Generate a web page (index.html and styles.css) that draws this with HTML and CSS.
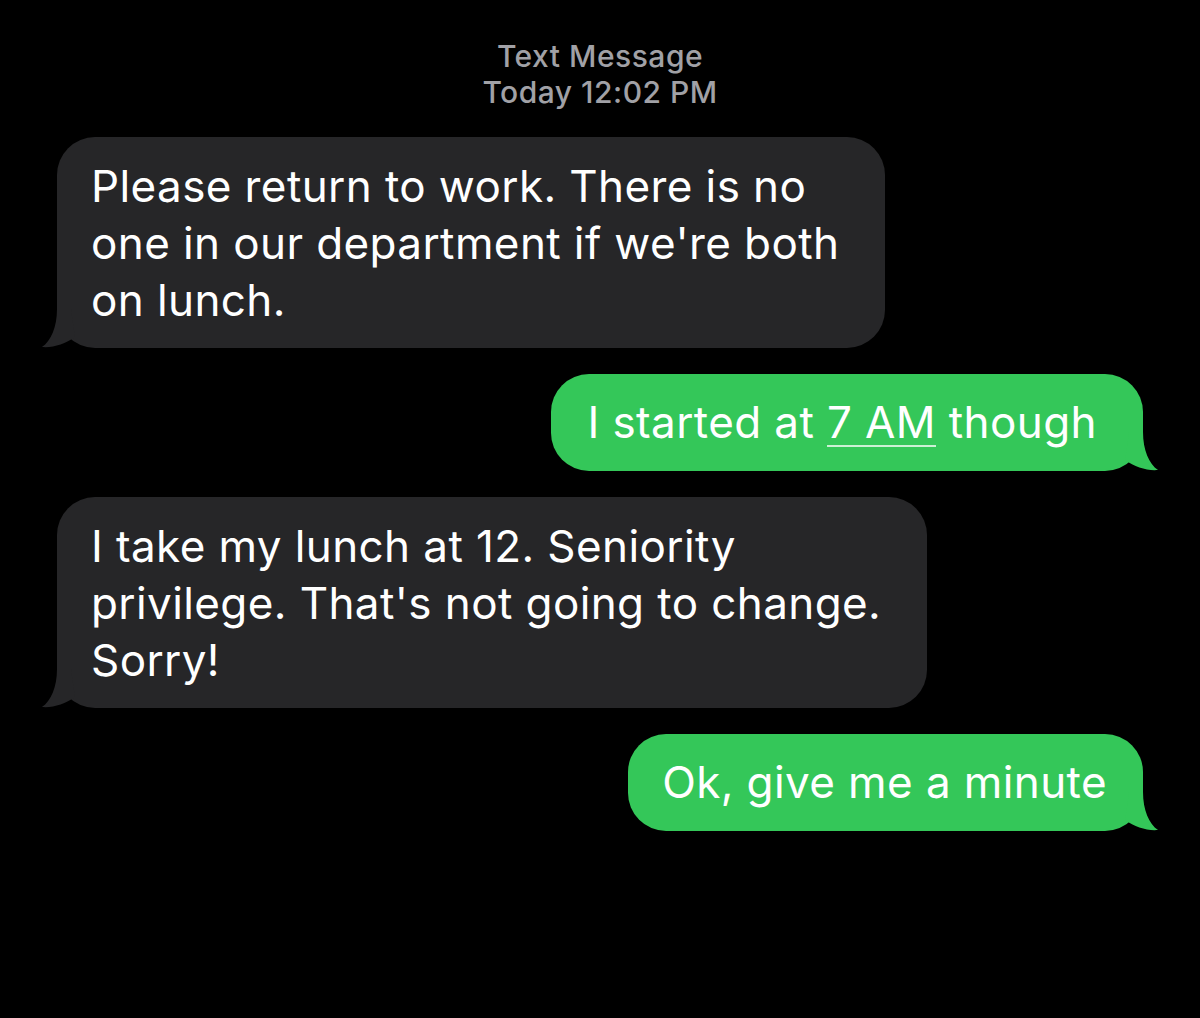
FILE: index.html
```html
<!DOCTYPE html>
<html lang="en">
<head>
<meta charset="utf-8">
<title>Text Message</title>
<link rel="stylesheet" href="styles.css">
</head>
<body>
<main class="thread">
  <header class="thread-header">
    <div class="thread-kind">Text Message</div>
    <div class="thread-time">Today 12:02 PM</div>
  </header>

  <div class="row row-in">
    <div class="bubble bubble-in">
      Please return to work. There is no<br>one in our department if we're both<br>on lunch.
      <svg class="tail tail-in" viewBox="0 0 40 40" width="40" height="40" aria-hidden="true"><path d="M16 0 C16 18 10 32 1 38 C12 39 24 35 34 28 L30 0 Z"/></svg>
    </div>
  </div>

  <div class="row row-out">
    <div class="bubble bubble-out">
      I started at <span class="link">7 AM</span> though
      <svg class="tail tail-out" viewBox="0 0 40 40" width="40" height="40" aria-hidden="true"><path d="M16 0 C16 18 10 32 1 38 C12 39 24 35 34 28 L30 0 Z"/></svg>
    </div>
  </div>

  <div class="row row-in">
    <div class="bubble bubble-in">
      I take my lunch at 12. Seniority<br>privilege. That's not going to change.<br>Sorry!
      <svg class="tail tail-in" viewBox="0 0 40 40" width="40" height="40" aria-hidden="true"><path d="M16 0 C16 18 10 32 1 38 C12 39 24 35 34 28 L30 0 Z"/></svg>
    </div>
  </div>

  <div class="row row-out">
    <div class="bubble bubble-out bubble-short">
      Ok, give me a minute
      <svg class="tail tail-out" viewBox="0 0 40 40" width="40" height="40" aria-hidden="true"><path d="M16 0 C16 18 10 32 1 38 C12 39 24 35 34 28 L30 0 Z"/></svg>
    </div>
  </div>
</main>
</body>
</html>
```

FILE: styles.css
```css
html, body {
  margin: 0;
  padding: 0;
  background: #000;
}

body {
  width: 1200px;
  height: 1018px;
  overflow: hidden;
  font-family: Inter, "Noto Sans", "Liberation Sans", sans-serif;
  -webkit-font-smoothing: antialiased;
}

.thread {
  display: flex;
  flex-direction: column;
  gap: 26px;
  padding: 38px 57px 0 57px;
}

.thread-header {
  display: flex;
  flex-direction: column;
  align-items: center;
  color: #a1a1a6;
  font-size: 30px;
  line-height: 36px;
  letter-spacing: 0.5px;
  font-weight: 500;
  margin-bottom: 1px;
}

.row {
  display: flex;
}

.row-in {
  justify-content: flex-start;
}

.row-out {
  justify-content: flex-end;
}

.bubble {
  position: relative;
  color: #fff;
  font-size: 44px;
  line-height: 57px;
  letter-spacing: 0.4px;
  padding: 20px 46px 20px 34px;
  border-radius: 38px;
}

.bubble-in {
  background: #262628;
}

.bubble-in:first-child {
  padding-top: 21px;
  padding-bottom: 19px;
}

.bubble-out {
  background: #34c759;
  padding: 20px 46px 20px 36px;
}

.bubble-short {
  padding-left: 34px;
  padding-right: 36px;
}

.tail {
  position: absolute;
  bottom: -1px;
}

.tail-in {
  left: -16px;
  fill: #262628;
}

.tail-out {
  right: -16px;
  fill: #34c759;
  transform: scaleX(-1);
}

.link {
  text-decoration: underline;
  text-decoration-thickness: 2px;
  text-underline-offset: 7px;
  text-decoration-color: rgba(255, 255, 255, 0.75);
}
```
